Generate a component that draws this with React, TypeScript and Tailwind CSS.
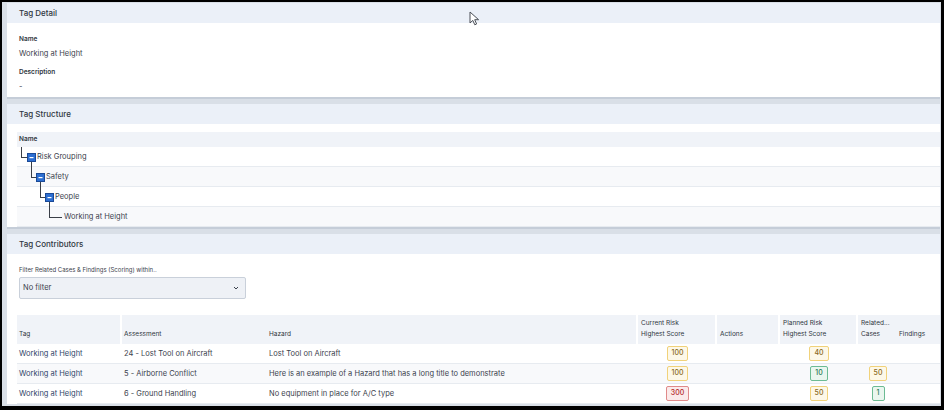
import React from 'react';

type Tone = 'amber' | 'green' | 'red';

const toneClass: Record<Tone, string> = {
  amber: 'border-[#f1d27a] bg-[#fdf8e8] text-[#8a6a1c]',
  green: 'border-[#6cbb93] bg-[#eaf6ef] text-[#2b7a55]',
  red: 'border-[#e08a8a] bg-[#fbeaea] text-[#b42a2a]',
};

const Score: React.FC<{ value: number; tone: Tone }> = ({ value, tone }) => (
  <span
    className={`inline-flex h-[15px] min-w-[13px] items-center justify-center rounded-[2px] border px-[4px] text-[7px] font-medium ${toneClass[tone]}`}
  >
    {value}
  </span>
);

const PanelHeader: React.FC<{ title: string }> = ({ title }) => (
  <div className="flex h-[20px] items-center bg-[#ebf0f8] pl-[12px] text-[8px] font-medium text-[#2f3640]">
    {title}
  </div>
);

interface Contributor {
  tag: string;
  assessment: string;
  hazard: string;
  current: [number, Tone];
  planned: [number, Tone];
  cases?: [number, Tone];
}

const contributors: Contributor[] = [
  {
    tag: 'Working at Height',
    assessment: '24 - Lost Tool on Aircraft',
    hazard: 'Lost Tool on Aircraft',
    current: [100, 'amber'],
    planned: [40, 'amber'],
  },
  {
    tag: 'Working at Height',
    assessment: '5 - Airborne Conflict',
    hazard: 'Here is an example of a Hazard that has a long title to demonstrate',
    current: [100, 'amber'],
    planned: [10, 'green'],
    cases: [50, 'amber'],
  },
  {
    tag: 'Working at Height',
    assessment: '6 - Ground Handling',
    hazard: 'No equipment in place for A/C type',
    current: [300, 'red'],
    planned: [50, 'amber'],
    cases: [1, 'green'],
  },
];

const treeRows = [
  { name: 'Risk Grouping', indent: 'pl-[20px]' },
  { name: 'Safety', indent: 'pl-[29px]' },
  { name: 'People', indent: 'pl-[38px]' },
  { name: 'Working at Height', indent: 'pl-[47px]' },
];

const cols = 'grid grid-cols-[105px_143px_373px_79px_63px_78px_40px_42px]';

const TreeLines = () => (
  <svg className="pointer-events-none absolute left-0 top-0" width="60" height="95" viewBox="0 0 60 95">
    <g stroke="#3a3f47" strokeWidth="1" fill="none" shapeRendering="crispEdges">
      <path d="M4.5 15 V25.5 H10" />
      <path d="M14.5 29 V45.5 H19" />
      <path d="M23.5 49 V65.5 H28" />
      <path d="M32.5 69 V85.5 H45" />
    </g>
    {[0, 1, 2].map((i) => (
      <g key={i}>
        <rect x={10.5 + 9 * i} y={21.5 + 20 * i} width="8" height="8" fill="#2d6fd2" stroke="#1b4a96" />
        <rect x={12.5 + 9 * i} y={25 + 20 * i} width="4" height="1.2" fill="#ffffff" />
      </g>
    ))}
  </svg>
);

const Cursor = () => (
  <svg className="pointer-events-none absolute left-[467px] top-[9px]" width="12" height="15" viewBox="0 0 12 15">
    <path d="M1 1 L1 12 L3.8 9.4 L5.8 13.8 L7.6 13 L5.7 8.7 L9.6 8.7 Z" fill="#ffffff" stroke="#4a4f57" strokeWidth="1" strokeLinejoin="round" />
  </svg>
);

export default function App() {
  return (
    <div
      className="relative h-[410px] w-[944px] overflow-hidden border-b-[4px] border-l-2 border-r-[3px] border-t-2 border-black bg-[#d9dfe7] pr-[1px] pl-[5px] pt-[1px] text-[#3b424d]"
      style={{ fontFamily: 'Inter, "Noto Sans", sans-serif' }}
    >
      <div className="flex flex-col gap-[5px]">
        {/* Tag Detail */}
        <section className="border-b-2 border-[#c5cdd8] bg-white">
          <PanelHeader title="Tag Detail" />
          <div className="flex h-[74px] flex-col pl-[12px] pt-[12px]">
            <div className="text-[6.5px] font-semibold text-[#2f3640]">Name</div>
            <div className="mt-[3px] text-[7.5px]">Working at Height</div>
            <div className="mt-[9px] text-[6.5px] font-semibold text-[#2f3640]">Description</div>
            <div className="mt-[3px] text-[7.5px]">-</div>
          </div>
        </section>

        {/* Tag Structure */}
        <section className="border-b-2 border-[#c5cdd8] bg-white">
          <PanelHeader title="Tag Structure" />
          <div className="pl-[10px] pt-[8px]">
            <div className="relative">
              <div className="flex h-[15px] items-center bg-[#f0f3f8] pl-[2px] text-[6.5px] font-semibold text-[#2f3640]">
                Name
              </div>
              {treeRows.map((r, i) => (
                <div
                  key={r.name}
                  className={`flex h-[20px] items-center border-b border-[#e7ebf0] text-[7.5px] ${r.indent} ${i % 2 === 1 ? 'bg-[#f8f9fb]' : 'bg-white'}`}
                >
                  {r.name}
                </div>
              ))}
              <TreeLines />
            </div>
          </div>
        </section>

        {/* Tag Contributors */}
        <section className="bg-white">
          <PanelHeader title="Tag Contributors" />
          <div className="pl-[10px] pt-[11px]">
            <div className="pl-[2px] text-[6px] text-[#3b424d]">Filter Related Cases &amp; Findings (Scoring) within..</div>
            <div className="ml-[2px] mt-[3px] flex h-[22px] w-[227px] items-center justify-between rounded-[2px] border border-[#c9d0da] bg-[#eef1f6] pl-[3px] pr-[6px] text-[7.5px]">
              <span>No filter</span>
              <svg width="6" height="4" viewBox="0 0 6 4">
                <path d="M1 1 L3 3 L5 1" fill="none" stroke="#3b424d" strokeWidth="1" />
              </svg>
            </div>

            <div className="mt-[16px]">
              <div className={`${cols} h-[29px] text-[6.5px] text-[#2f3640]`}>
                <div className="flex items-end border-r-2 border-white bg-[#f0f3f8] pb-[4px] pl-[2px]">Tag</div>
                <div className="flex items-end bg-[#f0f3f8] pb-[4px] pl-[2px]">Assessment</div>
                <div className="flex items-end border-r-2 border-white bg-[#f0f3f8] pb-[4px] pl-[4px]">Hazard</div>
                <div className="flex flex-col justify-end gap-[2px] border-r-2 border-white bg-[#f0f3f8] pb-[4px] pl-[3px]">
                  <span>Current Risk</span>
                  <span>Highest Score</span>
                </div>
                <div className="flex items-end border-r-2 border-white bg-[#f0f3f8] pb-[4px] pl-[3px]">Actions</div>
                <div className="flex flex-col justify-end gap-[2px] border-r-2 border-white bg-[#f0f3f8] pb-[4px] pl-[3px]">
                  <span>Planned Risk</span>
                  <span>Highest Score</span>
                </div>
                <div className="col-span-2 flex flex-col justify-end gap-[2px] bg-[#f0f3f8] pb-[4px] pl-[3px]">
                  <span>Related...</span>
                  <div className="flex">
                    <span className="w-[38px]">Cases</span>
                    <span>Findings</span>
                  </div>
                </div>
              </div>

              {contributors.map((c, i) => (
                <div
                  key={c.assessment}
                  className={`${cols} h-[20px] items-center border-b border-[#e7ebf0] text-[7.5px] ${i % 2 === 1 ? 'bg-[#f8f9fb]' : 'bg-white'}`}
                >
                  <div className="pl-[2px] text-[#2e4569]">{c.tag}</div>
                  <div className="pl-[2px]">{c.assessment}</div>
                  <div className="pl-[4px]">{c.hazard}</div>
                  <div className="flex justify-center">
                    <Score value={c.current[0]} tone={c.current[1]} />
                  </div>
                  <div />
                  <div className="flex justify-center">
                    <Score value={c.planned[0]} tone={c.planned[1]} />
                  </div>
                  <div className="flex justify-center">
                    {c.cases && <Score value={c.cases[0]} tone={c.cases[1]} />}
                  </div>
                  <div />
                </div>
              ))}
            </div>
          </div>
        </section>
      </div>
      <Cursor />
    </div>
  );
}
